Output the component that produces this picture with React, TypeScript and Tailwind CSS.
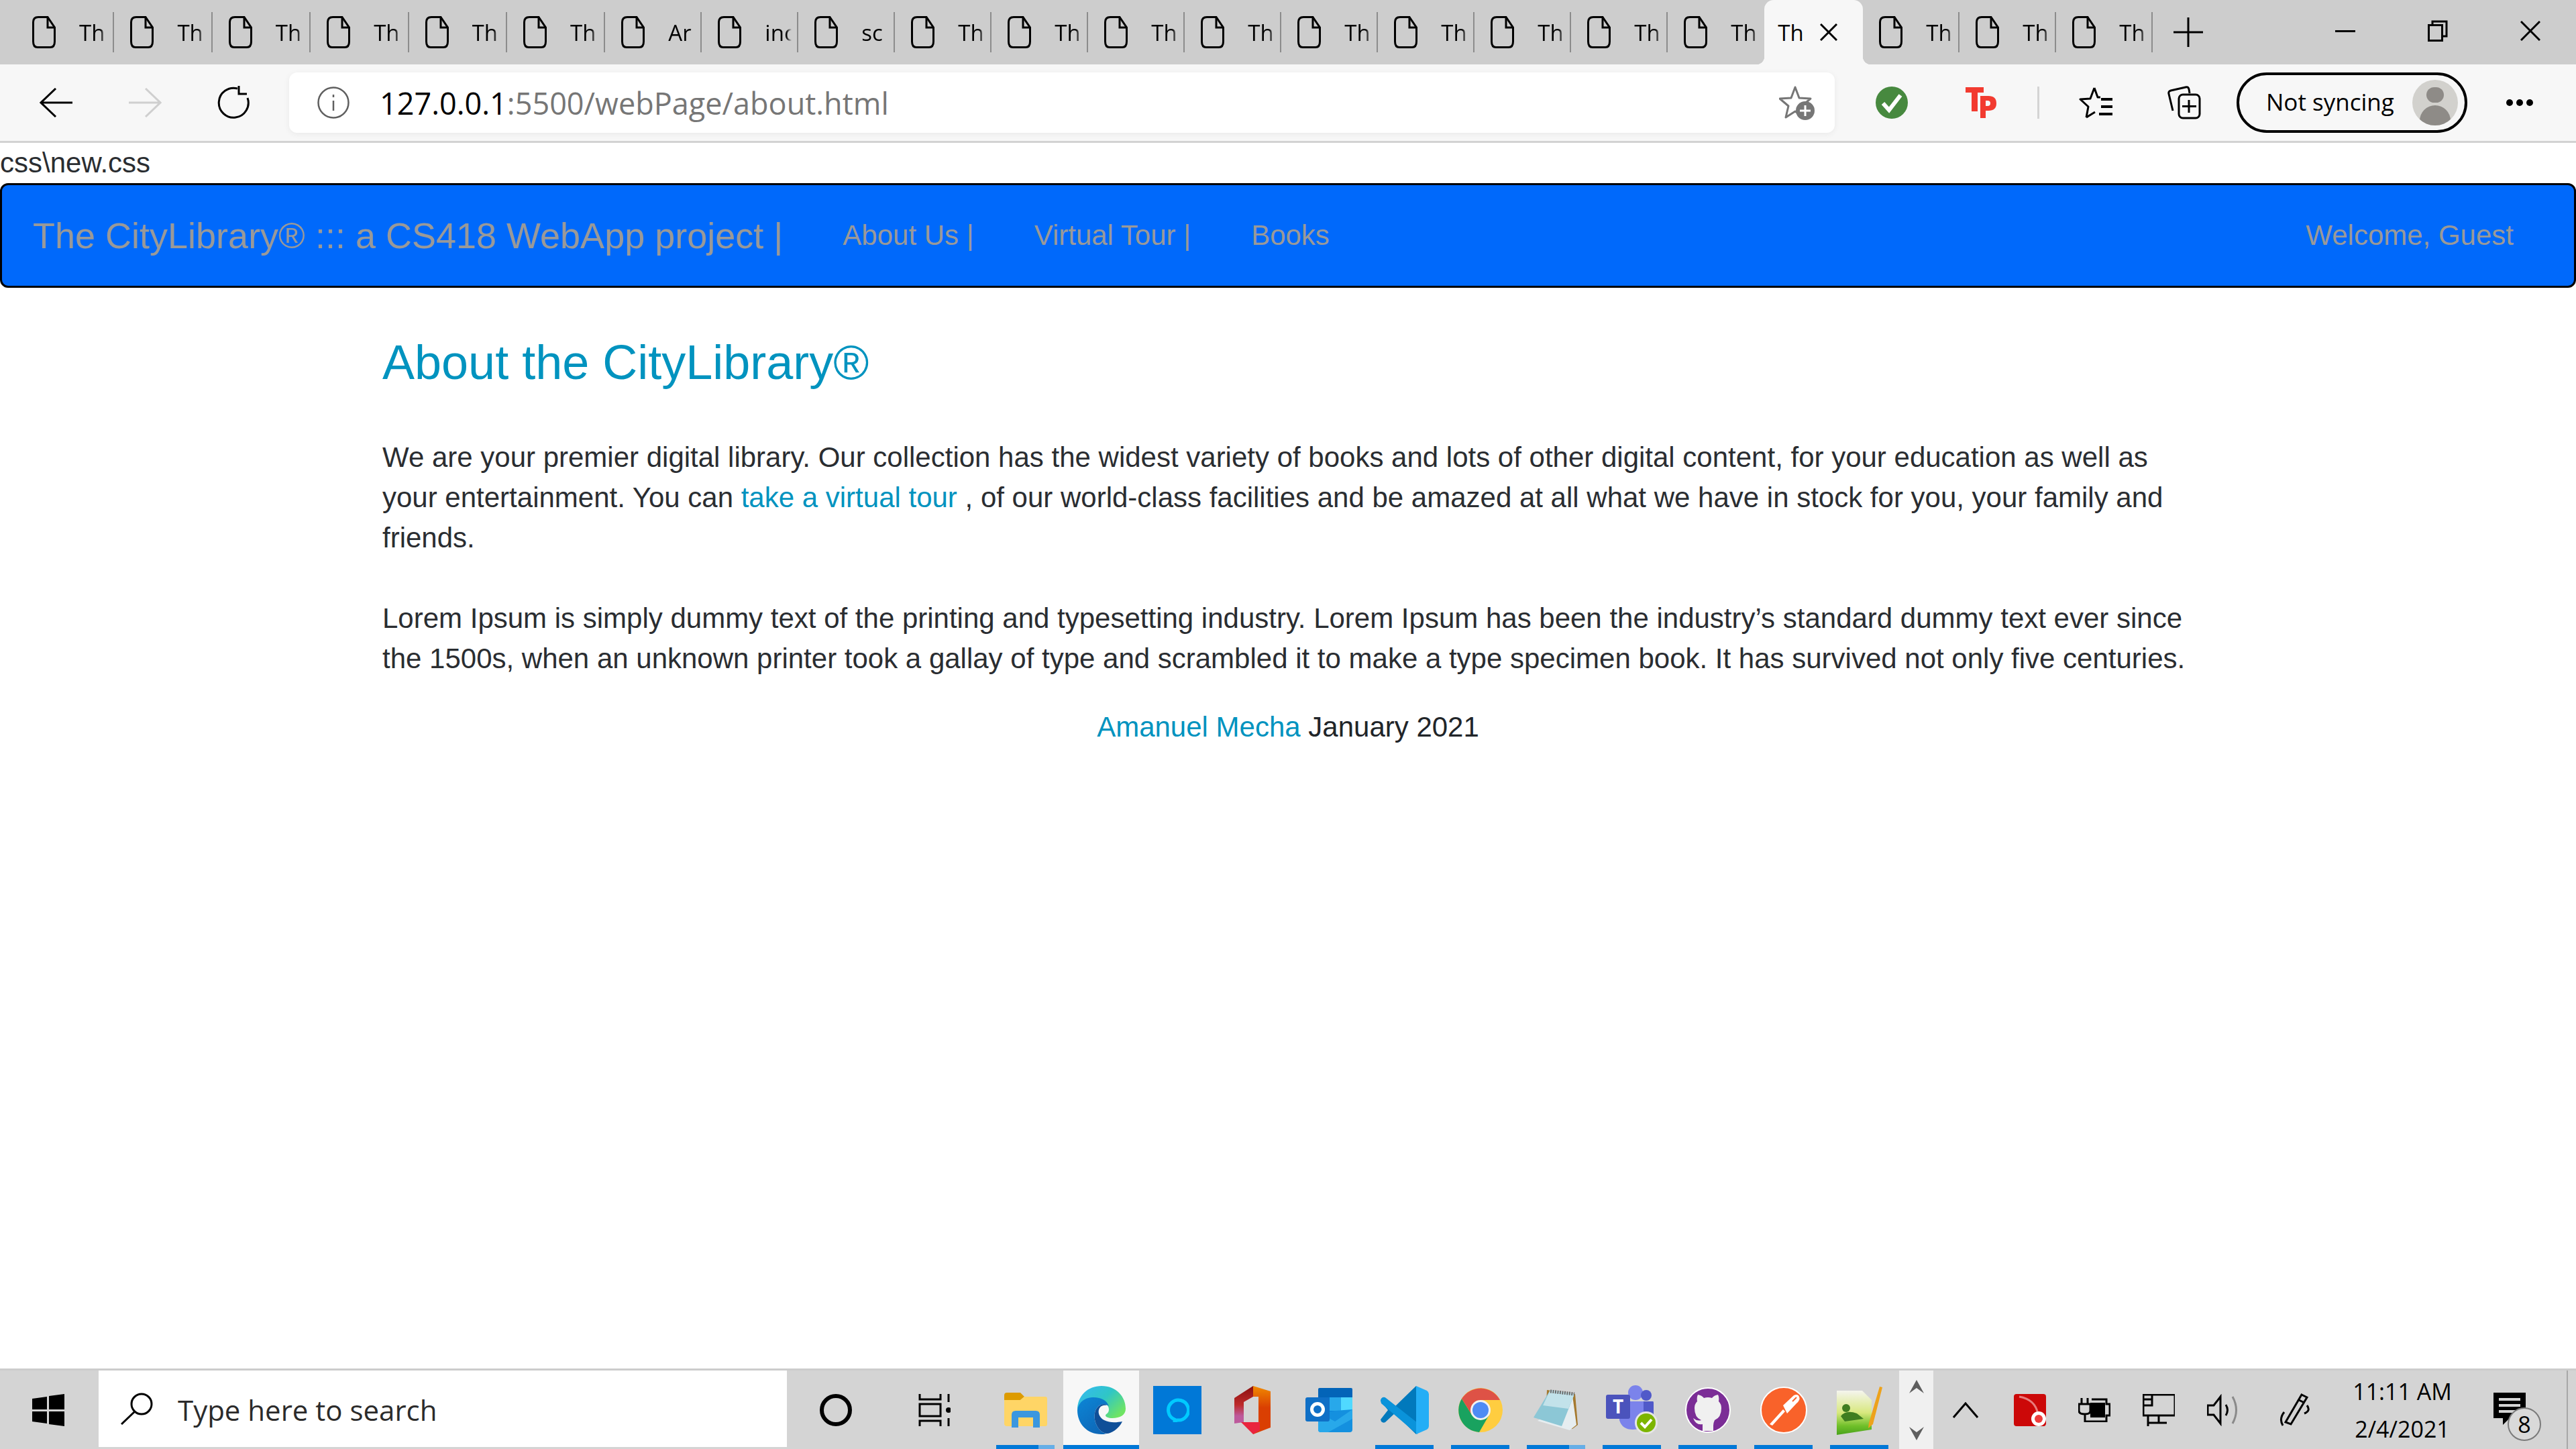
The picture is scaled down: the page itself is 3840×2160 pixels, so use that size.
// browser window with the about page, plus the windows taskbar
const tabs = [
  'Th', 'Th', 'Th', 'Th', 'Th', 'Th', 'Ar', 'inc', 'sc', 'Th', 'Th', 'Th', 'Th', 'Th', 'Th', 'Th', 'Th', 'Th',
];
const uiFont = "font-['Open_Sans','Noto_Sans',sans-serif]";

function FileIcon() {
  return (
    <svg width="35" height="48" viewBox="0 0 35 48" fill="none" stroke="#000" strokeWidth="3" className="flex-none">
      <path d="M9 1.5H23L33.5 17V38Q33.5 46.5 27 46.5H8Q1.5 46.5 1.5 38V9Q1.5 1.5 9 1.5Z" />
      <path d="M23 1.5V17H33.5" />
    </svg>
  );
}

function Tab({ title, index }: { title: string; index: number }) {
  return (
    <div className={index < 6 ? 'flex h-full w-[146.4px] flex-none items-center pl-[24px]' : 'flex h-full w-[144px] flex-none items-center pl-[24px]'}>
      <FileIcon />
      <span className="ml-[35px] w-[40px] overflow-hidden text-[33px] leading-none whitespace-nowrap text-black [mask-image:linear-gradient(to_right,black_80%,transparent)]">
        {title}
      </span>
      {index !== 17 && <span className="ml-auto h-[60px] w-[2px] bg-[#8c8c8c]" />}
    </div>
  );
}

function ActiveTab() {
  return (
    <div className="relative flex h-full w-[147px] flex-none items-center rounded-t-[14px] bg-[#f7f7f7] pl-[20px]">
      <span className="absolute bottom-0 left-[-12px] h-[12px] w-[12px] bg-[radial-gradient(circle_at_0_0,transparent_12px,#f7f7f7_12.5px)]" />
      <span className="absolute right-[-12px] bottom-0 h-[12px] w-[12px] bg-[radial-gradient(circle_at_100%_0,transparent_12px,#f7f7f7_12.5px)]" />
      <span className="w-[40px] overflow-hidden text-[33px] leading-none text-black">Th</span>
      <svg width="26" height="26" viewBox="0 0 26 26" stroke="#000" strokeWidth="3" className="ml-[23px] flex-none">
        <path d="M1 1 25 25M25 1 1 25" />
      </svg>
    </div>
  );
}

function TabStrip() {
  return (
    <div className={`flex h-[96px] flex-none bg-[#cdcdcd] pl-[24px] ${uiFont}`}>
      {tabs.map((title, i) => (
        <Tab key={i} title={title} index={i} />
      ))}
      <ActiveTab />
      <Tab title="Th" index={18} />
      <Tab title="Th" index={19} />
      <Tab title="Th" index={20} />
      <div className="flex h-full w-[106px] flex-none items-center justify-center">
        <svg width="44" height="44" viewBox="0 0 44 44" stroke="#000" strokeWidth="3">
          <path d="M22 0V44M0 22H44" />
        </svg>
      </div>
      <div className="ml-auto flex h-full">
        <div className="flex w-[137px] items-center justify-center pb-[4px]">
          <span className="h-[3px] w-[30px] bg-black" />
        </div>
        <div className="flex w-[139px] items-center justify-center pb-[4px]">
          <svg width="30" height="32" viewBox="0 0 30 32" fill="none" stroke="#000" strokeWidth="3">
            <rect x="1.5" y="7.5" width="20" height="23" />
            <path d="M7 7V2H28V24H22" />
          </svg>
        </div>
        <div className="flex w-[137px] items-center justify-center pb-[4px]">
          <svg width="30" height="30" viewBox="0 0 30 30" stroke="#000" strokeWidth="3">
            <path d="M1 1 29 29M29 1 1 29" />
          </svg>
        </div>
      </div>
    </div>
  );
}

function Toolbar() {
  return (
    <div className={`flex h-[117px] flex-none items-center border-b-[3px] border-[#d2d2d2] bg-[#f7f7f7] pl-[18px] ${uiFont}`}>
      <div className="flex w-[132px] justify-center">
        <svg width="50" height="44" viewBox="0 0 50 44" fill="none" stroke="#000" strokeWidth="3">
          <path d="M24 1 2 22 24 43M2 22H49" />
        </svg>
      </div>
      <div className="flex w-[132px] justify-center">
        <svg width="50" height="44" viewBox="0 0 50 44" fill="none" stroke="#cfcfcf" strokeWidth="3">
          <path d="M26 1 48 22 26 43M48 22H1" />
        </svg>
      </div>
      <div className="flex w-[132px] justify-center">
        <svg width="50" height="50" viewBox="0 0 50 50" fill="none" stroke="#000" strokeWidth="3">
          <path d="M31 4A22 22 0 1 0 46 18" />
          <path d="M33 0V12H45" />
        </svg>
      </div>
      <div className="ml-[17px] flex h-[90px] w-[2304px] flex-none items-center rounded-[12px] bg-white pr-[29px] pl-[42px] shadow-[0_2px_10px_rgba(0,0,0,0.06)]">
        <svg width="48" height="48" viewBox="0 0 48 48" fill="none" stroke="#5f5f5f" strokeWidth="2.5" className="flex-none">
          <circle cx="24" cy="24" r="22.5" />
          <path d="M24 21V36M24 12V16" />
        </svg>
        <span className="ml-[45px] text-[45px] leading-none text-black">
          127.0.0.1<span className="text-[#767676]">:5500/webPage/about.html</span>
        </span>
        <svg width="54" height="52" viewBox="0 0 54 52" className="mt-[2px] ml-auto flex-none">
          <path d="M24 2 30 18 47 19 34 30 38 47 24 38 10 47 14 30 1 19 18 18Z" fill="none" stroke="#767676" strokeWidth="3" strokeLinejoin="round" />
          <circle cx="39" cy="37" r="14" fill="#767676" />
          <path d="M39 29V45M31 37H47" stroke="#fff" strokeWidth="3" />
        </svg>
      </div>
      <div className="ml-[18px] flex w-[134px] flex-none justify-center">
        <svg width="48" height="48" viewBox="0 0 48 48">
          <circle cx="24" cy="24" r="24" fill="#47893f" />
          <path d="M11 25 20 35 37 13" fill="none" stroke="#fff" strokeWidth="6" />
        </svg>
      </div>
      <div className="flex w-[132px] flex-none justify-center">
        <svg width="46" height="46" viewBox="0 0 46 46" fill="#f23b30">
          <path d="M0 0H27V8H18V36H9V8H0Z" />
          <path fillRule="evenodd" d="M22 13H34Q46 13 46 24T34 35H30V46H22ZM30 20V28H33Q37 28 37 24T33 20Z" />
        </svg>
      </div>
      <span className="ml-[18px] h-[48px] w-[3px] flex-none bg-[#d4d4d4]" />
      <div className="ml-[18px] flex w-[132px] flex-none justify-center">
        <svg width="50" height="48" viewBox="0 0 50 48" fill="none" stroke="#000" strokeWidth="3">
          <path d="M23 2 28 16H32M11 46 14 30 2 19 17 18 23 2M11 46 24 38" strokeLinejoin="round" />
          <path d="M33 19H50M33 30H50M30 41H50" strokeWidth="4" />
        </svg>
      </div>
      <div className="flex w-[132px] flex-none justify-center">
        <svg width="50" height="50" viewBox="0 0 50 50" fill="none" stroke="#000" strokeWidth="3">
          <path d="M8 37 2 12Q1 8 5 7L27 2Q31 1 32 5L33 11" />
          <rect x="17" y="13" width="31" height="35" rx="6" />
          <path d="M32 21V40M22 30.500H43" />
        </svg>
      </div>
      <div className="ml-[12px] flex h-[90px] w-[344px] flex-none items-center rounded-full border-[4px] border-black pl-[40px]">
        <span className="pb-[3px] text-[35px] leading-none whitespace-nowrap text-black">Not syncing</span>
        <div className="ml-auto mr-[10px] flex h-[68px] w-[68px] flex-col items-center overflow-hidden rounded-full bg-[#d2d1cd]">
          <span className="mt-[11px] h-[26px] w-[26px] rounded-full bg-[#8e8b87]" />
          <span className="mt-[4px] h-[34px] w-[46px] rounded-t-full bg-[#8e8b87]" />
        </div>
      </div>
      <div className="flex w-[156px] flex-none justify-center gap-[5px]">
        <span className="h-[10px] w-[10px] rounded-full bg-black" />
        <span className="h-[10px] w-[10px] rounded-full bg-black" />
        <span className="h-[10px] w-[10px] rounded-full bg-black" />
      </div>
    </div>
  );
}

function Page() {
  const navLink = 'text-[42px] leading-[60px] text-[#999999]';
  return (
    <div className="min-h-0 flex-1 bg-white font-['Liberation_Sans',Arial,sans-serif] text-[42px] leading-[60px] text-[#2a2d31]">
      <div>css\new.css</div>
      <nav className="flex h-[156px] items-center rounded-[12px] border-[3px] border-black bg-[#0069fb] pr-[90px] pl-[46px]">
        <span className="text-[54px] leading-none whitespace-nowrap text-[#999999]">The CityLibrary® ::: a CS418 WebApp project |</span>
        <a className={`ml-[89px] ${navLink}`}>About Us |</a>
        <a className={`ml-[90px] ${navLink}`}>Virtual Tour |</a>
        <a className={`ml-[90px] ${navLink}`}>Books</a>
        <span className={`ml-auto ${navLink}`}>Welcome, Guest</span>
      </nav>
      <main className="mx-auto w-[2700px] pt-[66px]">
        <h2 className="mb-[67px] text-[72px] leading-[90px] text-[#0093bf]">About the CityLibrary®</h2>
        <p className="mb-[60px]">
          We are your premier digital library. Our collection has the widest variety of books and lots of other digital
          content, for your education as well as your entertainment. You can{' '}
          <a className="text-[#0093bf]">take a virtual tour</a> , of our world-class facilities and be amazed at all what we
          have in stock for you, your family and friends.
        </p>
        <p className="mb-[42px]">
          Lorem Ipsum is simply dummy text of the printing and typesetting industry. Lorem Ipsum has been the industry’s
          standard dummy text ever since the 1500s, when an unknown printer took a gallay of type and scrambled it to make a
          type specimen book. It has survived not only five centuries.
        </p>
        <p className="text-center">
          <a className="text-[#0093bf]">Amanuel Mecha</a> <span className="text-[#212529]">January 2021</span>
        </p>
      </main>
    </div>
  );
}

function FolderIcon() {
  return (
    <svg width="64" height="52" viewBox="0 0 64 52">
      <path d="M0 4Q0 0 4 0H24L30 6 24 11H0Z" fill="#dd9b00" />
      <path d="M0 11H24L30 6H61Q64 6 64 9V47Q64 50 61 50H4Q0 50 0 46Z" fill="#ffd566" />
      <path d="M11 52V33Q11 27 17 27H47Q53 27 53 33V52H43V37H21V52Z" fill="#3b97df" />
    </svg>
  );
}

function EdgeIcon() {
  return (
    <svg width="72" height="72" viewBox="0 0 72 72">
      <defs>
        <linearGradient id="edgeTop" x1="0" y1="0" x2="1" y2="0.7">
          <stop offset="0" stopColor="#35b8f4" />
          <stop offset="0.55" stopColor="#2fc6c6" />
          <stop offset="1" stopColor="#6fe463" />
        </linearGradient>
        <linearGradient id="edgeLeft" x1="0" y1="0" x2="0.6" y2="1">
          <stop offset="0" stopColor="#0c86d6" />
          <stop offset="1" stopColor="#0e68b8" />
        </linearGradient>
      </defs>
      <path d="M0 36C0 14 16 0 36 0 58 0 72 16 72 34 72 43 64 48 52 48 46 48 42 46 42 44 42 42 47 41 47 35 47 28 41 26 36 26 18 20 3 24 0 36Z" fill="url(#edgeTop)" />
      <path d="M0 36C2 22 14 17 24 17 36 17 44 22 47 30 41 26 33 27 29 33 20 46 30 70 44 71 40 72 38 72 36 72 14 72 0 56 0 36Z" fill="url(#edgeLeft)" />
      <path d="M29 33C33 27 41 26 44 29 30 26 27 44 40 51 50 56 60 54 67 53 62 64 50 71 44 71 30 70 20 46 29 33Z" fill="#0f4f98" />
    </svg>
  );
}

function AlexaIcon() {
  return (
    <div className="flex h-[72px] w-[72px] items-center justify-center bg-[#0078d7]">
      <svg width="36" height="36" viewBox="0 0 36 36" fill="none">
        <path d="M14 32A15 15 0 1 1 18 33L14 35Z" stroke="#00caff" strokeWidth="5" />
      </svg>
    </div>
  );
}

function OfficeIcon() {
  return (
    <svg width="56" height="72" viewBox="0 0 56 72">
      <defs>
        <linearGradient id="officeLeft" x1="0" y1="0" x2="0" y2="1">
          <stop offset="0" stopColor="#8a0f0f" />
          <stop offset="0.5" stopColor="#bd2a2a" />
          <stop offset="0.8" stopColor="#bd5a9c" />
        </linearGradient>
        <linearGradient id="officeRight" x1="0" y1="0" x2="0" y2="1">
          <stop offset="0" stopColor="#f08a00" />
          <stop offset="0.45" stopColor="#da3f02" />
        </linearGradient>
      </defs>
      <path d="M0 18 28 0 V16L14 24V54L0 56Z" fill="url(#officeLeft)" />
      <path d="M28 0 54 8V62L28 72 28 54H36V16H28Z" fill="url(#officeRight)" />
      <path d="M10 54H38V66L28 72Z" fill="#e9243e" />
    </svg>
  );
}

function OutlookIcon() {
  return (
    <svg width="70" height="66" viewBox="0 0 70 66">
      <rect x="19" y="0" width="51" height="20" rx="2" fill="#0364b8" />
      <rect x="19" y="14" width="17" height="20" fill="#0078d4" />
      <rect x="36" y="14" width="17" height="20" fill="#28a8ea" />
      <rect x="53" y="14" width="17" height="20" fill="#50d9ff" />
      <rect x="19" y="34" width="51" height="18" fill="#0078d4" />
      <path d="M19 36 70 32V62Q70 66 66 66H23Q19 66 19 62Z" fill="#1490df" />
      <path d="M19 36 44 50 70 32V46L34 66H23Q19 66 19 62Z" fill="#28a8ea" />
      <rect x="0" y="14" width="36" height="36" rx="3" fill="#0f6fc6" />
      <circle cx="18" cy="32" r="8.500" fill="none" stroke="#fff" strokeWidth="5" />
    </svg>
  );
}

function VsCodeIcon() {
  return (
    <svg width="72" height="72" viewBox="0 0 72 72">
      <path d="M53 0 21 31 7 18Q4 16 1 19L0 22 11 36 0 50 1 53Q4 56 7 54L21 41 53 72Z" fill="#0179bc" />
      <path d="M0 22Q0 19 3 17 6 16 8 18L55 55V72L50 68 1 26Z" fill="#0a93da" />
      <path d="M53 0 69 7Q72 9 72 12V60Q72 63 69 65L53 72Z" fill="#23aef6" />
    </svg>
  );
}

function ChromeIcon() {
  return (
    <svg width="66" height="66" viewBox="0 0 66 66">
      <circle cx="33" cy="33" r="33" fill="#ffcd40" />
      <path d="M5 16 20 40H46L31 66A33 33 0 0 1 5 16Z" fill="#19a25f" />
      <path d="M5 16A33 33 0 0 1 62 18H33L20 40Z" fill="#de5246" />
      <circle cx="33" cy="33" r="15" fill="#f1f1f1" />
      <circle cx="33" cy="33" r="12" fill="#4e8bf5" />
    </svg>
  );
}

function NotepadIcon() {
  return (
    <svg width="68" height="64" viewBox="0 0 68 64">
      <path d="M20 2 62 8 66 54 58 60 18 50Z" fill="#a5792f" />
      <path d="M58 10 64 54 54 62 6 48 30 30Z" fill="#e6edf0" />
      <path d="M25 2 61 8 42 56 0 43Z" fill="#8cc7d6" />
      <path d="M25 2 61 8 52 30 14 25Z" fill="#c2e2ea" />
      <path d="M25 4 61 8" stroke="#6b6b6b" strokeWidth="5" strokeDasharray="2 1.500" />
    </svg>
  );
}

function TeamsIcon() {
  return (
    <svg width="78" height="74" viewBox="0 0 78 74">
      <circle cx="44" cy="11" r="11" fill="#7b83eb" />
      <circle cx="60" cy="15" r="8" fill="#5059c9" />
      <path d="M54 24H70Q71 24 71 26V50H54Z" fill="#5059c9" />
      <path d="M20 24H56V52Q56 66 40 66 24 66 20 52Z" fill="#7b83eb" />
      <rect x="0" y="14" width="36" height="36" rx="3" fill="#4b53bc" />
      <text x="18" y="42" textAnchor="middle" fill="#fff" fontFamily="'Open Sans', sans-serif" fontWeight="700" fontSize="28">
        T
      </text>
      <circle cx="60" cy="56" r="17" fill="#e6e6e6" />
      <circle cx="60" cy="56" r="14" fill="#7cb500" />
      <path d="M52 56 58 62 68 51" fill="none" stroke="#fff" strokeWidth="4" />
    </svg>
  );
}

function GithubIcon() {
  return (
    <svg width="68" height="70" viewBox="0 0 68 70">
      <circle cx="34" cy="35" r="33" fill="#7b2d96" stroke="#fff" strokeWidth="2" />
      <path d="M26 66V56Q16 58 12 47 18 52 24 50 14 46 14 32 14 26 18 22 17 16 19 12 25 13 28 17 34 15 40 17 43 13 49 12 51 16 50 22 54 26 54 32 54 46 44 50 42 54 42 58V66Z" fill="#f0f0f0" />
    </svg>
  );
}

function PostmanIcon() {
  return (
    <svg width="70" height="70" viewBox="0 0 70 70">
      <circle cx="35" cy="35" r="34" fill="#f9622a" stroke="#fff" strokeWidth="2" />
      <path d="M14 56 34 34 37 37 18 58Z" fill="#fff" />
      <path d="M34 28 50 13Q56 10 58 15 60 20 54 25L40 40Z" fill="#fff" />
      <path d="M48 22 54 16" stroke="#f9622a" strokeWidth="2" />
    </svg>
  );
}

function NotepadPlusIcon() {
  return (
    <svg width="68" height="74" viewBox="0 0 68 74">
      <defs>
        <linearGradient id="nppPage" x1="0" y1="0" x2="0" y2="1">
          <stop offset="0" stopColor="#f5f5ee" />
          <stop offset="0.5" stopColor="#d8e87e" />
          <stop offset="0.8" stopColor="#6fbf29" />
          <stop offset="1" stopColor="#4aa31c" />
        </linearGradient>
      </defs>
      <path d="M0 8H38L52 22V66L0 74Z" fill="url(#nppPage)" />
      <path d="M48 56 64 2 68 3 54 58 47 64Z" fill="#eda21b" />
      <circle cx="14" cy="34" r="6" fill="#3f7d20" />
      <path d="M6 46Q14 36 30 42L40 50 12 54Z" fill="#3f7d20" />
    </svg>
  );
}

const apps = [
  { key: 'folder', icon: <FolderIcon />, bar: 'split' },
  { key: 'edge', icon: <EdgeIcon />, bar: 'active' },
  { key: 'alexa', icon: <AlexaIcon />, bar: '' },
  { key: 'office', icon: <OfficeIcon />, bar: '' },
  { key: 'outlook', icon: <OutlookIcon />, bar: '' },
  { key: 'vscode', icon: <VsCodeIcon />, bar: 'full' },
  { key: 'chrome', icon: <ChromeIcon />, bar: 'full' },
  { key: 'notepad', icon: <NotepadIcon />, bar: 'split' },
  { key: 'teams', icon: <TeamsIcon />, bar: 'full' },
  { key: 'github', icon: <GithubIcon />, bar: 'full' },
  { key: 'postman', icon: <PostmanIcon />, bar: 'full' },
  { key: 'npp', icon: <NotepadPlusIcon />, bar: 'full' },
];

function AppSlot({ icon, bar }: { icon: React.ReactNode; bar: string }) {
  return (
    <div className={bar === 'active' ? 'relative flex h-full w-[113px] flex-none items-center justify-center bg-[#f7f7f7]' : 'relative flex h-full w-[113px] flex-none items-center justify-center'}>
      {icon}
      {bar === 'active' && <span className="absolute inset-x-0 bottom-0 h-[6px] bg-[#0078d7]" />}
      {bar === 'full' && <span className="absolute inset-x-[13px] bottom-0 h-[6px] bg-[#0078d7]" />}
      {bar === 'split' && (
        <span className="absolute inset-x-[13px] bottom-0 flex h-[6px]">
          <span className="flex-1 bg-[#0078d7]" />
          <span className="w-[24px] bg-[#66aee7]" />
        </span>
      )}
    </div>
  );
}

function TraySlot({ children }: { children: React.ReactNode }) {
  return <div className="flex h-full w-[96px] flex-none items-center justify-center">{children}</div>;
}

function Taskbar() {
  return (
    <div className={`flex h-[120px] flex-none border-t-[3px] border-[#cccccc] bg-[#d4d4d4] ${uiFont}`}>
      <div className="flex w-[147px] flex-none items-center justify-center pr-[4px]">
        <svg width="48" height="48" viewBox="0 0 48 48" fill="#000">
          <path d="M0 7 22 4V23H0ZM25 3 48 0V23H25ZM0 26H22V44L0 41ZM25 26H48V48L25 45Z" />
        </svg>
      </div>
      <div className="flex h-[114px] w-[1026px] flex-none items-center bg-white pl-[33px]">
        <svg width="48" height="48" viewBox="0 0 48 48" fill="none" stroke="#000" strokeWidth="3">
          <circle cx="31" cy="17" r="15" />
          <path d="M21 28 1 47" />
        </svg>
        <span className="ml-[37px] pt-[4px] text-[42px] leading-none text-[#2b2b2b]">Type here to search</span>
      </div>
      <div className="flex w-[146px] flex-none items-center justify-center">
        <span className="h-[48px] w-[48px] rounded-full border-[6px] border-black" />
      </div>
      <div className="flex w-[153px] flex-none items-center justify-start pl-[50px]">
        <svg width="48" height="48" viewBox="0 0 48 48" fill="none" stroke="#000" strokeWidth="3">
          <path d="M2 0V8H33V0M2 48V40H33V48M45 0V12M45 36V48" />
          <rect x="2" y="15" width="31" height="18" />
          <circle cx="45" cy="24" r="4" fill="#000" stroke="none" />
        </svg>
      </div>
      {apps.map((app) => (
        <AppSlot key={app.key} icon={app.icon} bar={app.bar} />
      ))}
      <div className="ml-[3px] flex h-full w-[51px] flex-none flex-col items-center justify-center gap-[50px] bg-[#f0f0f0]">
        <svg width="22" height="20" viewBox="0 0 22 20" fill="#5e5e5e">
          <path d="M11 0 22 20 11 12 0 20Z" />
        </svg>
        <svg width="22" height="20" viewBox="0 0 22 20" fill="#5e5e5e">
          <path d="M11 20 22 0 11 8 0 0Z" />
        </svg>
      </div>
      <TraySlot>
        <svg width="38" height="24" viewBox="0 0 38 24" fill="none" stroke="#000" strokeWidth="3">
          <path d="M1 23 19 2 37 23" />
        </svg>
      </TraySlot>
      <TraySlot>
        <svg width="48" height="48" viewBox="0 0 48 48">
          <rect width="48" height="48" rx="4" fill="#cc0808" />
          <path d="M8 4Q32 8 36 30" fill="none" stroke="#e87c7c" strokeWidth="3" />
          <circle cx="37" cy="37" r="11" fill="#fff" />
          <circle cx="37" cy="37" r="6" fill="#ee3b3b" />
        </svg>
      </TraySlot>
      <TraySlot>
        <svg width="48" height="36" viewBox="0 0 48 36" fill="none" stroke="#000" strokeWidth="3">
          <path d="M5 0V9M14 0V9M1 9H18V19Q18 24 10 24 1 24 1 19ZM10 24V35H42V26H47V9H42V2H20" />
          <rect x="18" y="7" width="22" height="22" fill="#000" stroke="none" />
        </svg>
      </TraySlot>
      <TraySlot>
        <svg width="48" height="48" viewBox="0 0 48 48" fill="none" stroke="#000" strokeWidth="3">
          <path d="M1 1H48V32H1ZM14 1V17H1M1 8H14M8 32V48M8 43H36M24 32V43" />
        </svg>
      </TraySlot>
      <TraySlot>
        <svg width="48" height="48" viewBox="0 0 48 48" fill="none" stroke="#000" strokeWidth="3">
          <path d="M1 17V31H10L20 44V4L10 17Z" />
          <path d="M28 16Q33 24 28 32" />
          <path d="M38 4Q49 24 38 44" stroke="#8a8a8a" />
        </svg>
      </TraySlot>
      <div className="flex h-full w-[120px] flex-none items-center justify-center">
        <svg width="50" height="50" viewBox="0 0 50 50" fill="none" stroke="#000" strokeWidth="3">
          <path d="M34 2 42 6 18 46 10 43ZM30 10 38 14" />
          <path d="M42 18Q48 26 38 30M8 28Q0 38 6 48" />
        </svg>
      </div>
      <div className="flex h-full w-[200px] flex-none flex-col items-center justify-center gap-[22px] pr-[2px] text-[34px] leading-[34px] text-black">
        <span>11:11 AM</span>
        <span>2/4/2021</span>
      </div>
      <div className="relative flex h-full flex-1 items-start pt-[33px] pl-[35px]">
        <svg width="48" height="48" viewBox="0 0 48 48">
          <path d="M0 0H48V38H24L14 48V38H0Z" fill="#000" />
          <path d="M8 10H40M8 19H40M8 28H32" stroke="#d4d4d4" strokeWidth="4" />
        </svg>
        <span className="absolute top-[55px] left-[56px] flex h-[50px] w-[50px] items-center justify-center rounded-full border-[2px] border-[#7a7a7a] bg-[#d9d9d9] text-[34px] leading-none text-black">
          8
        </span>
        <span className="absolute top-0 right-[12px] h-full w-[2px] bg-[#a8a8a8]" />
      </div>
    </div>
  );
}

export default function App() {
  return (
    <div className="flex h-[2160px] w-[3840px] flex-col overflow-hidden">
      <TabStrip />
      <Toolbar />
      <Page />
      <Taskbar />
    </div>
  );
}
